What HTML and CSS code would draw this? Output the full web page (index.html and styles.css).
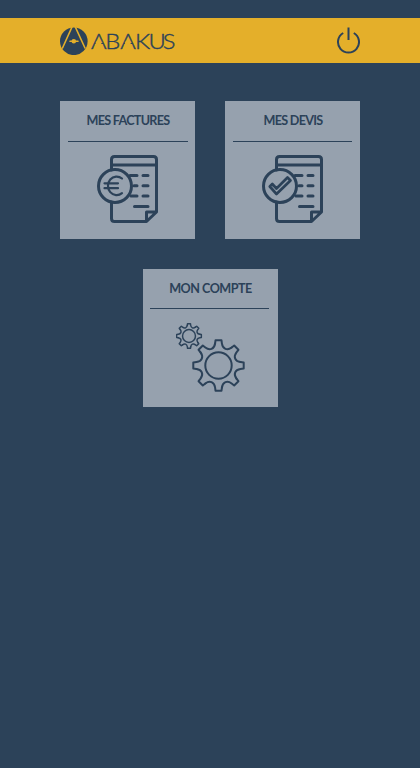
FILE: index.html
```html
<!DOCTYPE html>
<html lang="fr">
<head>
<meta charset="utf-8">
<title>Abakus</title>
<link rel="stylesheet" href="styles.css">
</head>
<body>
<header class="topbar">
  <svg class="logo" viewBox="0 0 116 28" role="img" aria-label="Abakus">
    <circle class="solid" cx="13.800" cy="14.300" r="13.800"/>
    <path class="cut" d="M12 0 2.500 21M15.300 0 25 21M10 14.300H18"/>
    <circle class="dot" cx="13.800" cy="14.300" r="2.300"/>
    <text class="wordmark" transform="scale(1.08 1)" y="22.300" x="28.700 41.800 55.800 69.500 81.900 95.200">ABAKUS</text>
    <path class="counter" d="M36.200 14.500H40.800L41.900 18.500H35.100ZM65.500 14.500H70.100L71.200 18.500H64.400Z"/>
  </svg>
  <a class="power" href="#" aria-label="Déconnexion">
    <svg viewBox="0 0 24 28"><path class="line" d="M12.500 .5V13M7.200 6A10.500 10.500 0 1 0 17.800 6"/></svg>
  </a>
</header>
<main class="tiles">
  <a class="tile" href="#">
    <h2>MES FACTURES</h2>
    <svg class="icon" viewBox="0 0 62 70">
      <g id="doc" class="thick">
        <path d="M14.5 16V5.500Q14.500 2.500 17.500 2.500H56.500Q59.500 2.500 59.500 5.500V58L49.500 67.500H17.500Q14.500 67.500 14.500 64.500V48M14.500 11H59.500M49.500 67V58H59"/>
        <path d="M33 21.500H40M46 21.500H51M37 31.700H40M46 31.700H51M34 42H40M46 42H51M37.500 52.500H51"/>
        <circle cx="18" cy="32" r="16.500"/>
      </g>
      <path class="euro" d="M25 24.500A8.700 9.300 0 1 0 25 39.200M7.500 29.300H21M7.500 34.200H21"/>
    </svg>
  </a>
  <a class="tile" href="#">
    <h2>MES DEVIS</h2>
    <svg class="icon" viewBox="0 0 62 70">
      <use href="#doc"/>
      <path class="check" d="M7.800 32.500 10.300 30 14.500 34.500 25.500 23.500 28.500 26.500 14.500 40Z"/>
    </svg>
  </a>
  <a class="tile account" href="#">
    <h2>MON COMPTE</h2>
    <svg class="gears" viewBox="0 0 70 70">
      <defs>
        <path id="tooth" d="M-3.4-22 -3-25.200H3L3.400-22C4.200-16.500 8.700-14.640 13.150-17.960"/>
        <g id="gear">
          <use href="#tooth"/><use href="#tooth" transform="rotate(45)"/>
          <use href="#tooth" transform="rotate(90)"/><use href="#tooth" transform="rotate(135)"/>
          <use href="#tooth" transform="rotate(180)"/><use href="#tooth" transform="rotate(225)"/>
          <use href="#tooth" transform="rotate(270)"/><use href="#tooth" transform="rotate(315)"/>
          <circle r="13.200"/>
        </g>
      </defs>
      <use class="gear" href="#gear" transform="translate(42.500 43.500)"/>
      <use class="gear small" href="#gear" transform="translate(13 14) scale(.49)"/>
    </svg>
  </a>
</main>
</body>
</html>
```
FILE: styles.css
```css
* { box-sizing: border-box; }
body {
  margin: 0;
  padding-top: 18px;
  min-height: 768px;
  background: #2c4259;
  color: #2c4259;
  font-family: Lato, "Liberation Sans", sans-serif;
}
a { color: inherit; text-decoration: none; }
svg { display: block; fill: none; stroke: #2c4259; stroke-linecap: round; stroke-linejoin: round; }
.topbar {
  height: 45px;
  padding: 0 60px;
  display: flex;
  align-items: center;
  justify-content: space-between;
  background: #e4af2a;
}
.logo { width: 116px; height: 28px; }
.solid { fill: #2c4259; stroke: none; }
.cut { stroke: #e4af2a; stroke-width: 1.6; }
.dot, .counter { fill: #e4af2a; stroke: none; }
.wordmark { fill: #2c4259; stroke-width: .4; font-size: 22px; font-weight: 300; }
.power svg { width: 24px; height: 28px; }
.line { stroke-width: 2; stroke-linecap: butt; }
.tiles {
  padding: 38px 60px 0;
  display: flex;
  flex-wrap: wrap;
  justify-content: center;
  gap: 30px;
}
.tile {
  width: 135px;
  height: 138px;
  padding: 0 7px 0 8px;
  background: #96a1ae;
}
.tile:nth-child(2) { padding-right: 8px; }
.tile:nth-child(2) h2 { padding-left: 1px; }
h2 {
  margin: 0;
  height: 41px;
  line-height: 40px;
  border-bottom: 1px solid #2c4259;
  text-align: center;
  font-size: 12.6px;
  font-weight: 700;
  letter-spacing: -.7px;
  white-space: nowrap;
}
.icon { width: 62px; height: 70px; margin: 12px 0 0 29px; }
.thick { stroke-width: 3; }
.euro { stroke-width: 2.2; }
.check { stroke-width: 2.7; }
.account { padding: 0 9px 0 7px; }
.account h2 { height: 40px; padding-left: 3px; letter-spacing: -.5px; }
.gears { width: 70px; height: 70px; margin: 13px 0 0 26px; }
.gear { stroke-width: 2; }
.small { stroke-width: 3; }
```
